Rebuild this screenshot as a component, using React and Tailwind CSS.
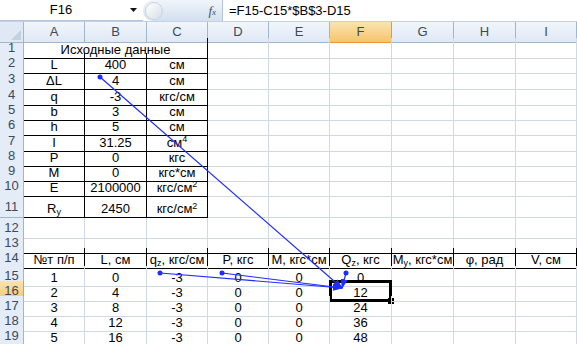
import React from "react";

const FONT = { fontFamily: '"Liberation Sans", Arial, sans-serif' };

const letters = ["A", "B", "C", "D", "E", "F", "G", "H", "I"];

const Sup = ({ children }) => <sup className="text-[9px]">{children}</sup>;
const Sub = ({ children }) => <sub className="text-[9px]">{children}</sub>;

// строки листа: номер, высота, содержимое A..I
const rows = [
  { n: 1, h: "h-[15px]", cells: [] },
  { n: 2, h: "h-[16px]", cells: ["L", "400", "см"] },
  { n: 3, h: "h-[16px]", cells: ["ΔL", "4", "см"] },
  { n: 4, h: "h-[15px]", cells: ["q", "-3", "кгс/см"] },
  { n: 5, h: "h-[15px]", cells: ["b", "3", "см"] },
  { n: 6, h: "h-[16px]", cells: ["h", "5", "см"] },
  { n: 7, h: "h-[15px]", cells: ["I", "31.25", <>см<Sup>4</Sup></>] },
  { n: 8, h: "h-[15px]", cells: ["P", "0", "кгс"] },
  { n: 9, h: "h-[15px]", cells: ["M", "0", "кгс*см"] },
  { n: 10, h: "h-[20px]", cells: ["E", "2100000", <>кгс/см<Sup>2</Sup></>] },
  { n: 11, h: "h-[22px]", cells: [<>R<Sub>y</Sub></>, "2450", <>кгс/см<Sup>2</Sup></>] },
  { n: 12, h: "h-[15px]", cells: [] },
  { n: 13, h: "h-[15px]", cells: [] },
  {
    n: 14,
    h: "h-[18px]",
    cells: [
      "№т п/п",
      "L, см",
      <>q<Sub>z</Sub>, кгс/см</>,
      "P, кгс",
      "M, кгс*см",
      <>Q<Sub>z</Sub>, кгс</>,
      <>M<Sub>y</Sub>, кгс*см</>,
      "φ, рад",
      "V, см",
    ],
  },
  { n: 15, h: "h-[15px]", cells: ["1", "0", "-3", "0", "0", "0"] },
  { n: 16, h: "h-[15px]", cells: ["2", "4", "-3", "0", "0", "12"] },
  { n: 17, h: "h-[15px]", cells: ["3", "8", "-3", "0", "0", "24"] },
  { n: 18, h: "h-[15px]", cells: ["4", "12", "-3", "0", "0", "36"] },
  { n: 19, h: "h-[15px]", cells: ["5", "16", "-3", "0", "0", "48"] },
];

const GRID = "grid grid-cols-[24px_61px_62px_61px_61px_61px_62px_62px_62px_61px]";

const cellBorder = (r, c) => {
  const inTop = r >= 1 && r <= 11 && c <= 2;
  const right = inTop || r === 14 ? "border-r-black" : "border-r-[#d0d7e5]";
  const bottom = inTop || r === 13 || r === 14 ? "border-b-black" : "border-b-[#d0d7e5]";
  return `${right} ${bottom}`;
};

function RowHeader({ n }) {
  const active = n === 16;
  return (
    <div
      className={
        active
          ? "flex items-center justify-center border-r border-b border-[#f29536] bg-linear-to-b from-[#fbe3b0] to-[#f5c56a] text-[13px] text-[#3b4a5e]"
          : "flex items-center justify-center border-r border-b border-[#9eb6ce] bg-[#e4ecf7] text-[13px] text-[#3b4a5e]"
      }
    >
      {n}
    </div>
  );
}

function Row({ row }) {
  return (
    <div className={`${GRID} ${row.h}`}>
      <RowHeader n={row.n} />
      {row.n === 1 ? (
        <>
          <div className="col-span-3 flex items-end justify-center border-r border-b border-r-black border-b-black pb-[1px] text-[13px] leading-[14px]">
            Исходные данные
          </div>
          {letters.slice(3).map((l) => (
            <div key={l} className="border-r border-b border-[#d0d7e5]" />
          ))}
        </>
      ) : (
        letters.map((l, c) => (
          <div
            key={l}
            className={`relative flex items-end justify-center whitespace-nowrap border-r border-b pb-[1px] text-[13px] leading-[14px] ${cellBorder(row.n, c)}`}
          >
            <span>{row.cells[c] ?? ""}</span>
            {row.n === 16 && l === "F" && (
              <>
                <div className="absolute -left-[1px] -top-[1px] -right-[1px] -bottom-[1px] border-[3px] border-black" />
                <div className="absolute -right-[3px] -bottom-[3px] h-[6px] w-[6px] bg-black" />
              </>
            )}
          </div>
        ))
      )}
    </div>
  );
}

function FormulaBar() {
  return (
    <div className="flex h-[22px] border-b border-[#c3d1e4] bg-white">
      <div className="flex w-[143px] items-center border-b border-[#b4c3d7]">
        <span className="w-[122px] text-center text-[13px]">F16</span>
        <svg width="8" height="5" viewBox="0 0 8 5" className="ml-[8px]">
          <path d="M0 0h7L3.5 4z" fill="#111" />
        </svg>
      </div>
      <div className="flex w-[79px] items-center justify-between rounded-l-[10px] bg-linear-to-b from-[#f0f5fb] to-[#d3e0ef] pr-[6px]">
        <div className="ml-[2px] h-[18px] w-[18px] rounded-full border border-[#c9d4e2] bg-linear-to-br from-white to-[#d8dfe8]" />
        <span className="text-[13px] italic text-[#3d4f66]" style={{ fontFamily: '"Liberation Serif", serif' }}>
          f<span className="text-[9px]">x</span>
        </span>
      </div>
      <div className="flex flex-1 items-center border-l border-[#b4c3d7] pl-[6px] text-[13px]">=F15-C15*$B$3-D15</div>
    </div>
  );
}

function ColumnHeaders() {
  return (
    <div className={`${GRID} h-[16px]`}>
      <div className="relative border-r border-b border-[#9eb6ce] bg-[#dfe8f4]">
        <svg width="10" height="10" viewBox="0 0 10 10" className="absolute right-[2px] bottom-[2px]">
          <path d="M10 0V10H0z" fill="#c3d0e0" />
        </svg>
      </div>
      {letters.map((l) => (
        <div
          key={l}
          className={
            l === "F"
              ? "flex items-center justify-center border-r border-b border-[#f29536] bg-linear-to-b from-[#fbe3b0] to-[#f5c56a] text-[13px] text-[#3b4a5e]"
              : "flex items-center justify-center border-r border-b border-[#9eb6ce] bg-linear-to-b from-[#f2f6fb] to-[#dfe8f4] text-[13px] text-[#3b4a5e]"
          }
        >
          {l}
        </div>
      ))}
    </div>
  );
}

function Arrows() {
  const tip = { x: 342, y: 288 };
  const starts = [
    { x: 100, y: 77 },
    { x: 160, y: 273 },
    { x: 222, y: 273 },
    { x: 346, y: 273 },
  ];
  return (
    <svg className="pointer-events-none absolute left-0 top-0" width="577" height="344">
      <defs>
        <marker id="ah" markerWidth="10" markerHeight="7" refX="9" refY="3.5" orient="auto" markerUnits="userSpaceOnUse">
          <path d="M0 0L10 3.5L0 7z" fill="#1f2cff" />
        </marker>
      </defs>
      {starts.map((s, i) => (
        <g key={i}>
          <line x1={s.x} y1={s.y} x2={tip.x} y2={tip.y} stroke="#1f2cff" strokeWidth="1.2" markerEnd="url(#ah)" />
          <circle cx={s.x} cy={s.y} r="2.5" fill="#1f2cff" />
        </g>
      ))}
    </svg>
  );
}

export default function App() {
  return (
    <div className="relative h-[344px] w-[577px] overflow-hidden bg-white text-black" style={FONT}>
      <FormulaBar />
      <ColumnHeaders />
      {rows.map((r) => (
        <Row key={r.n} row={r} />
      ))}
      <Arrows />
    </div>
  );
}
